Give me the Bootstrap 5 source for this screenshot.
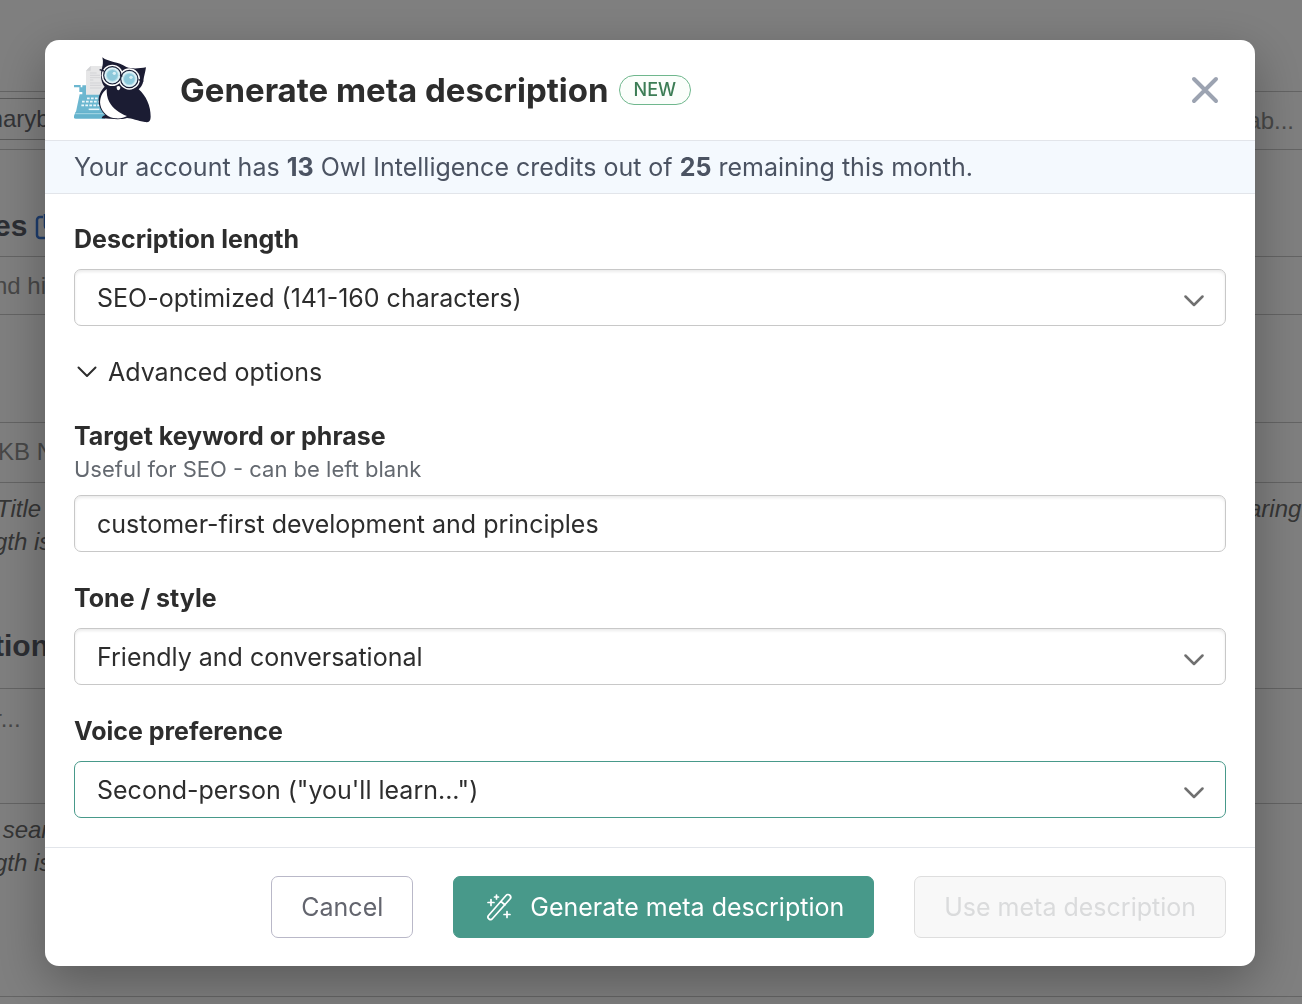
<!DOCTYPE html>
<html lang="en">
<head>
<meta charset="utf-8">
<meta name="viewport" content="width=device-width, initial-scale=1">
<title>Generate meta description</title>
<link href="https://cdn.jsdelivr.net/npm/bootstrap@5.3.0/dist/css/bootstrap.min.css" rel="stylesheet">
<style>
  body { font-family: Inter, "Liberation Sans", sans-serif; font-size: 25px; line-height: 32px; color: #2d2d2d; overflow: hidden; }

  /* article settings page underneath the dialog */
  .settings-page { font-family: "Liberation Sans", sans-serif; font-size: 24px; line-height: 33px; color: #6c6c6c; height: 100vh; overflow: hidden; margin-left: -6px; }
  .settings-row { display: flex; align-items: center; justify-content: space-between; border-bottom: 1px solid #c8c8c8; flex: none; white-space: nowrap; overflow: hidden; }
  .settings-row.h-top { height: 92px; }
  .settings-row.h-line { height: 58px; }
  .settings-row.h-title { height: 107px; }
  .settings-row.h-gap { height: 108px; }
  .settings-row.h-field { height: 60px; padding-bottom: 3px; }
  .settings-row.h-notes { height: 206px; }
  .settings-row.h-area { height: 115px; padding-top: 13px; }
  .settings-row.h-last { height: 193px; }
  .settings-heading { font-size: 30px; font-weight: 700; color: #585c66; margin: 0; }
  .page-note { padding-top: 9px; }
  .page-note.runs-on { margin-right: -6px; }
  .faint-text { color: #8f8f8f; }
  .author-input { width: 200px; height: 42px; margin: 0 0 4px -12px; padding: 0; border: 1px solid #b4b4b4; background: transparent; color: #66686e; }

  .modal-backdrop { --bs-backdrop-opacity: .5; }
  .meta-dialog { max-width: none; margin: 40px 47px 38px 45px; }
  .meta-dialog .modal-content { border: 0; border-radius: 14px; box-shadow: 0 16px 50px rgba(0,0,0,.3); color: inherit; }
  .meta-dialog .modal-header { height: 101px; padding: 0 29px; border-color: #e2e5ea; }
  .meta-dialog .modal-title { font-size: 33px; line-height: 40px; font-weight: 700; margin-left: 28px; }
  .new-pill { font-size: 18px; line-height: 28px; font-weight: 500; color: #3c7d55; background: #fbfefb; border: 1px solid #6fb78d; padding: 0 14px; margin-left: 10px; }
  .close-dialog { width: 43px; height: 43px; line-height: 0; }
  .credit-strip { background: #f4f9fe; color: #4b5362; border-bottom: 1px solid #e2e5ea; padding: 10px 29px; }
  .meta-dialog .modal-body { padding: 29px 29px 0; }
  .field-group { margin-bottom: 30px; }
  .field-group:last-child { margin-bottom: 29px; }
  .field-group .form-label { display: block; font-weight: 700; margin-bottom: 14px; }
  .field-group .form-label.with-help { margin-bottom: 0; }
  .field-help { font-size: 22px; line-height: 34px; color: #646970; margin-bottom: 9px; }
  .meta-control { height: 57px; font-size: 25px; line-height: 32px; padding: 0 22px; color: #2d2d2d; border: 1px solid #c8c8c8; border-radius: 7px; box-shadow: inset 0 2px 3px rgba(0,0,0,.08); }
  .meta-control.form-select {
    --bs-form-select-bg-img: url("data:image/svg+xml,%3Csvg xmlns='http://www.w3.org/2000/svg' viewBox='0 0 20 12'%3E%3Cpath d='M1.5 1.5 10 10l8.500-8.500' fill='none' stroke='%23707070' stroke-width='2.500' stroke-linecap='round' stroke-linejoin='round'/%3E%3C/svg%3E");
    background-position: right 21px top 25px; background-size: 20px 12px; padding-right: 60px;
  }
  .meta-control.is-current { border-color: #48998a; box-shadow: none; }
  .advanced-toggle { color: inherit; gap: 11px; padding: 0 0 0 3px; margin-bottom: 32px; font-size: 25px; line-height: 32px; }
  .meta-dialog .modal-footer { padding: 28px 29px; gap: 40px; border-color: #e2e5ea; }
  .modal-footer .btn { margin: 0; height: 62px; padding: 0 29px; font-size: 25px; line-height: 32px; border-radius: 7px; }
  .btn-cancel { --bs-btn-color: #63656e; --bs-btn-border-color: #b9b8c8; --bs-btn-bg: #fff; }
  .btn-generate { --bs-btn-color: #fff; --bs-btn-bg: #48998a; --bs-btn-border-color: #48998a; gap: 15px; }
  .btn-use { --bs-btn-disabled-color: #dadbdc; --bs-btn-disabled-bg: #f8f8f8; --bs-btn-disabled-border-color: #dedede; --bs-btn-disabled-opacity: 1; }
</style>
</head>
<body>

<main class="settings-page d-flex flex-column" aria-hidden="true">
  <div class="settings-row h-top"></div>
  <div class="settings-row h-line">
    <input class="author-input" type="text" value="maryb" aria-label="Author" tabindex="-1">
    <span class="faint-text pe-2">ab...</span>
  </div>
  <div class="settings-row h-title align-items-end justify-content-start pb-2">
    <h2 class="settings-heading pb-1">es</h2>
    <svg class="ms-2 mb-2" width="26" height="26" viewBox="0 0 26 26" fill="none" stroke="#3a78d8" stroke-width="2.500" aria-hidden="true"><path d="M8 3H5a3 3 0 0 0-3 3v15a3 3 0 0 0 3 3h16M10 0v12a3 3 0 0 0 3 3h12"/></svg>
  </div>
  <div class="settings-row h-line"><span class="faint-text">nd hi</span></div>
  <div class="settings-row h-gap"></div>
  <div class="settings-row h-field"><span class="faint-text ps-1">KB N</span></div>
  <div class="settings-row h-notes align-items-stretch">
    <div class="d-flex flex-column justify-content-between">
      <em class="page-note">&#8202;Title<br>gth is</em>
      <h2 class="settings-heading pb-4">tion</h2>
    </div>
    <em class="page-note runs-on">aring.</em>
  </div>
  <div class="settings-row h-area align-items-start"><span class="faint-text">r...</span></div>
  <div class="settings-row h-last align-items-start"><em class="page-note">&nbsp;&#8202;sear<br>gth is</em></div>
</main>

<div class="modal-backdrop show"></div>

<div class="modal show d-block" role="dialog" aria-modal="true" aria-labelledby="dialogTitle">
  <div class="modal-dialog meta-dialog">
    <div class="modal-content">
      <div class="modal-header">
        <svg width="78" height="68" viewBox="42 33 234 204" aria-hidden="true">
          <!-- sheet of paper -->
          <path d="M92 63h48v90H78V77z" fill="#e6e6e7"/>
          <path d="M78 77l14-14v14z" fill="#d2d3d5"/>
          <path d="M90 84h20M90 91h30M90 98h30M90 105h10M90 114h34M90 121h34M90 129h34" stroke="#cfd0d2" stroke-width="2.500"/>
          <!-- typewriter -->
          <path d="M42 120h20v7h5v-6h11v28h45l10 56H47l12-57h8v-7h-9v-14H42z" fill="#6cb7d0"/>
          <path d="M47 200h88v21H47q-6 0-6-6z" fill="#65b3cd"/>
          <path d="M46 206h86" stroke="#a6d7e5" stroke-width="3"/>
          <path d="M81 160h40M66 170h54M64 181h56" stroke="#e9f6fa" stroke-width="5.500" stroke-dasharray="8 4"/>
          <path d="M86 193h32" stroke="#e9f6fa" stroke-width="4.500"/>
          <!-- owl -->
          <path d="M127 37c18 15 48 13 72 29 18 7 40 4 59 1-2 14-6 27-8 40-2 13-8 20-14 26 22 19 36 49 36 82 0 13-6 18-17 16-21-3-40-12-54-12-16 6-44 3-76 1 1-6 5-8 11-10-13-12-20-28-20-43 0-19 8-32 18-42-10-12-13-30-10-48 4-14 7-26 3-40z" fill="#1b1c33"/>
          <path d="M140 132c-14 10-22 29-19 47 4 23 24 40 47 41 14 1 24-2 33-7-23-8-43-23-53-42-7-13-8-26-8-39z" fill="#fff"/>
          <circle cx="157" cy="91" r="32" fill="#fff"/>
          <circle cx="208" cy="102" r="32" fill="#fff"/>
          <circle cx="157" cy="91" r="26" fill="#b4dde8" stroke="#1b1c33" stroke-width="3.500"/>
          <circle cx="208" cy="102" r="26" fill="#b4dde8" stroke="#1b1c33" stroke-width="3.500"/>
          <circle cx="157" cy="91" r="21" fill="none" stroke="#e4f3f7" stroke-width="4"/>
          <circle cx="208" cy="102" r="21" fill="none" stroke="#e4f3f7" stroke-width="4"/>
          <circle cx="157" cy="91" r="16" fill="#8cc8da"/>
          <circle cx="208" cy="102" r="16" fill="#8cc8da"/>
          <circle cx="163" cy="85" r="5" fill="#d9eff5"/>
          <circle cx="213" cy="97" r="5" fill="#d9eff5"/>
          <path d="M119 74l13 4M236 104l14 5M180 89l7 5" stroke="#1b1c33" stroke-width="4"/>
          <path d="M170 125q6-5 11 1 1 8-5 10-7-2-6-11z" fill="#fff"/>
        </svg>
        <h1 class="modal-title" id="dialogTitle">Generate meta description</h1>
        <span class="new-pill rounded-pill">NEW</span>
        <button type="button" class="btn p-0 border-0 ms-auto close-dialog" aria-label="Close">
          <svg width="28" height="28" viewBox="0 0 28 28" fill="none" stroke="#9ca3b1" stroke-width="4" stroke-linecap="round" aria-hidden="true"><path d="M3 3l22 22M25 3L3 25"/></svg>
        </button>
      </div>
      <div class="credit-strip">Your account has <strong>13</strong> Owl Intelligence credits out of <strong>25</strong> remaining this month.</div>

      <form class="modal-body" id="metaForm">
        <div class="field-group">
          <label class="form-label" for="descLength">Description length</label>
          <select class="form-select meta-control" id="descLength"><option>SEO-optimized (141-160 characters)</option></select>
        </div>

        <button type="button" class="btn border-0 d-flex align-items-center advanced-toggle" aria-expanded="true" aria-controls="advancedOptions">
          <svg width="20" height="12" viewBox="0 0 20 12" fill="none" stroke="#2d2d2d" stroke-width="2" stroke-linecap="round" stroke-linejoin="round" aria-hidden="true"><path d="M1.500 1.500 10 10l8.500-8.500"/></svg>
          Advanced options
        </button>

        <div id="advancedOptions">
          <div class="field-group">
            <label class="form-label with-help" for="keyword">Target keyword or phrase</label>
            <div class="field-help" id="keywordHelp">Useful for SEO - can be left blank</div>
            <input type="text" class="form-control meta-control" id="keyword" aria-describedby="keywordHelp" value="customer-first development and principles">
          </div>
          <div class="field-group">
            <label class="form-label" for="tone">Tone / style</label>
            <select class="form-select meta-control" id="tone"><option>Friendly and conversational</option></select>
          </div>
          <div class="field-group">
            <label class="form-label" for="voice">Voice preference</label>
            <select class="form-select meta-control is-current" id="voice"><option>Second-person ("you'll learn...")</option></select>
          </div>
        </div>
      </form>

      <div class="modal-footer">
        <button type="button" class="btn btn-cancel">Cancel</button>
        <button type="submit" form="metaForm" class="btn btn-generate d-flex align-items-center">
          <svg width="32" height="32" viewBox="0 0 32 32" fill="none" stroke="#fff" stroke-width="1.700" stroke-linecap="round" stroke-linejoin="round" aria-hidden="true">
            <path d="M5.500 24.500 23 4.500a2.600 2.600 0 0 1 4 3.500L9.500 27.500a2.500 2.500 0 0 1-4-3zM18 10.500l4 3.500M8 8.500v6M5 11.500h6M13.500 4v4M11.500 6h4M24 20.500v6M21 23.500h6"/>
          </svg>
          Generate meta description
        </button>
        <button type="button" class="btn btn-use" disabled>Use meta description</button>
      </div>
    </div>
  </div>
</div>

<script src="https://cdn.jsdelivr.net/npm/bootstrap@5.3.0/dist/js/bootstrap.bundle.min.js"></script>
</body>
</html>
